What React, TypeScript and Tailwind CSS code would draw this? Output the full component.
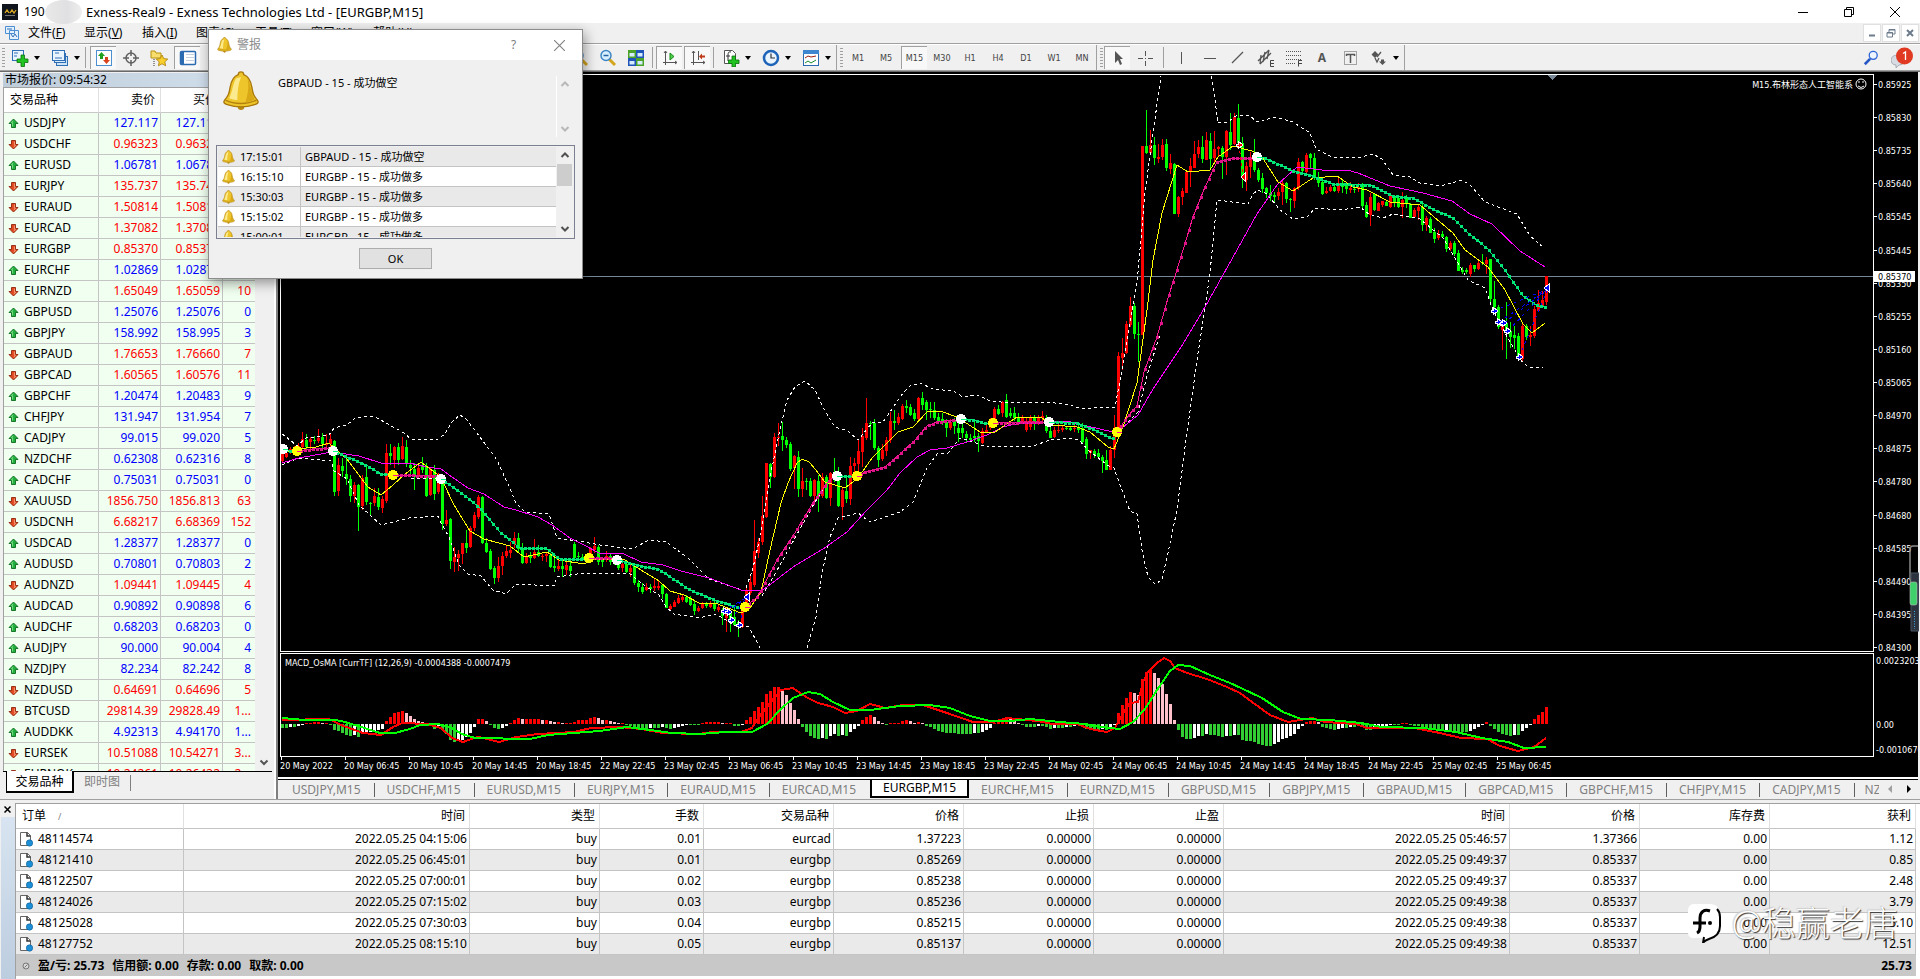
import React from "react";

type Quote = [string, boolean, string, string, string];

const quotes: Quote[] = [
  ["USDJPY", true, "127.117", "127.119", "2"],
  ["USDCHF", false, "0.96323", "0.96327", "4"],
  ["EURUSD", true, "1.06781", "1.06781", "0"],
  ["EURJPY", false, "135.737", "135.741", "4"],
  ["EURAUD", false, "1.50814", "1.50818", "4"],
  ["EURCAD", false, "1.37082", "1.37088", "6"],
  ["EURGBP", false, "0.85370", "0.85370", "0"],
  ["EURCHF", true, "1.02869", "1.02875", "6"],
  ["EURNZD", false, "1.65049", "1.65059", "10"],
  ["GBPUSD", true, "1.25076", "1.25076", "0"],
  ["GBPJPY", true, "158.992", "158.995", "3"],
  ["GBPAUD", false, "1.76653", "1.76660", "7"],
  ["GBPCAD", false, "1.60565", "1.60576", "11"],
  ["GBPCHF", true, "1.20474", "1.20483", "9"],
  ["CHFJPY", true, "131.947", "131.954", "7"],
  ["CADJPY", true, "99.015", "99.020", "5"],
  ["NZDCHF", true, "0.62308", "0.62316", "8"],
  ["CADCHF", true, "0.75031", "0.75031", "0"],
  ["XAUUSD", false, "1856.750", "1856.813", "63"],
  ["USDCNH", false, "6.68217", "6.68369", "152"],
  ["USDCAD", true, "1.28377", "1.28377", "0"],
  ["AUDUSD", true, "0.70801", "0.70803", "2"],
  ["AUDNZD", false, "1.09441", "1.09445", "4"],
  ["AUDCAD", true, "0.90892", "0.90898", "6"],
  ["AUDCHF", true, "0.68203", "0.68203", "0"],
  ["AUDJPY", true, "90.000", "90.004", "4"],
  ["NZDJPY", true, "82.234", "82.242", "8"],
  ["NZDUSD", false, "0.64691", "0.64696", "5"],
  ["BTCUSD", false, "29814.39", "29828.49", "1..."],
  ["AUDDKK", true, "4.92313", "4.94170", "1..."],
  ["EURSEK", false, "10.51088", "10.54271", "3..."],
  ["EURNOK", false, "10.24261", "10.26432", "2..."],
];

const orders = [
  ["48114574", "2022.05.25 04:15:06", "buy", "0.01", "eurcad", "1.37223", "0.00000", "0.00000", "2022.05.25 05:46:57", "1.37366", "0.00", "1.12"],
  ["48121410", "2022.05.25 06:45:01", "buy", "0.01", "eurgbp", "0.85269", "0.00000", "0.00000", "2022.05.25 09:49:37", "0.85337", "0.00", "0.85"],
  ["48122507", "2022.05.25 07:00:01", "buy", "0.02", "eurgbp", "0.85238", "0.00000", "0.00000", "2022.05.25 09:49:37", "0.85337", "0.00", "2.48"],
  ["48124026", "2022.05.25 07:15:02", "buy", "0.03", "eurgbp", "0.85236", "0.00000", "0.00000", "2022.05.25 09:49:38", "0.85337", "0.00", "3.79"],
  ["48125028", "2022.05.25 07:30:03", "buy", "0.04", "eurgbp", "0.85215", "0.00000", "0.00000", "2022.05.25 09:49:38", "0.85337", "0.00", "5.10"],
  ["48127752", "2022.05.25 08:15:10", "buy", "0.05", "eurgbp", "0.85137", "0.00000", "0.00000", "2022.05.25 09:49:38", "0.85337", "0.00", "12.51"],
];

const alerts = [
  ["17:15:01", "GBPAUD - 15 - 成功做空"],
  ["16:15:10", "EURGBP - 15 - 成功做多"],
  ["15:30:03", "EURGBP - 15 - 成功做多"],
  ["15:15:02", "EURGBP - 15 - 成功做多"],
  ["15:00:01", "EURGBP - 15 - 成功做多"],
];

const chartTabs = ["USDJPY", "USDCHF", "EURUSD", "EURJPY", "EURAUD", "EURCAD", "EURGBP", "EURCHF", "EURNZD", "GBPUSD", "GBPJPY", "GBPAUD", "GBPCAD", "GBPCHF", "CHFJPY", "CADJPY"];

/* Candles, one every 4 units from x=282: colour, high, body top, body bottom, low */
const candleText = `
r453,454,461,462 r450,453,457,458 r447,449,452,454 r446,448,450,452 r443,446,448,450 r432,439,447,449 g434,440,447,449 r437,439,442,449
g436,440,441,444 r429,438,441,443 g433,437,444,448 r434,443,445,448 r434,439,444,448 g440,441,492,496 r458,465,491,496 g458,466,471,477
g457,474,479,485 g475,479,496,502 r482,485,496,503 g484,485,507,531 r475,478,506,510 g465,477,502,505 g502,503,504,515 r488,496,503,506
g488,497,507,510 r496,499,508,513 r444,453,501,503 g444,453,456,465 r446,447,460,468 g443,447,460,465 r437,446,459,460 g440,447,464,467
g460,465,468,475 g463,469,477,490 r465,468,477,478 g457,465,470,473 g463,467,496,497 r467,469,495,496 g465,470,494,500 r473,477,492,494
g475,478,524,530 r510,520,524,526 g518,519,561,569 r547,557,562,572 r550,554,558,571 r543,543,554,564 g530,543,548,553 r526,528,547,548
r512,515,528,531 r495,497,517,519 g496,497,543,544 g538,543,552,553 g549,551,569,570 g566,568,578,584 r557,566,578,582 r552,556,566,575
r545,551,556,558 r542,550,553,558 r532,538,544,548 g533,538,549,553 g543,549,563,564 r553,557,563,564 g552,556,558,563 r539,552,558,559
g545,552,556,557 r554,556,557,561 r552,554,556,562 g553,555,567,568 g558,566,568,572 r560,566,569,571 g560,566,569,577 r560,565,570,575
g562,566,571,577 g542,544,558,559 g552,556,557,560 g554,557,559,561 g555,558,560,562 r547,549,562,563 r537,546,550,553 g545,547,562,565
g557,559,562,567 r551,556,560,562 g553,556,562,565 g557,560,563,565 g559,561,568,570 r560,564,568,572 g562,564,572,573 r564,568,572,577
g565,566,583,585 g580,583,587,592 g583,587,592,594 r583,587,590,591 g584,587,589,593 r579,586,588,591 r580,586,588,590 g584,585,594,599
g593,594,608,608 r604,606,609,611 r600,602,607,607 r595,598,603,604 r594,597,600,602 g595,597,602,603 g596,599,605,606 g601,604,611,615
r606,608,611,612 r602,604,608,609 g602,604,606,608 r601,604,607,608 g598,604,609,611 r604,607,610,612 g608,610,616,625 r608,612,618,632
g610,612,620,632 g607,617,625,626 g620,622,626,637 r608,611,627,628 r585,591,610,612 r574,582,593,595 r520,551,585,587 r538,542,553,558
r496,516,542,545 r463,463,517,518 g463,464,477,488 r433,437,477,478 r423,437,438,446 g422,436,440,451 g437,440,445,448 g442,444,469,471
r455,456,468,489 g451,457,489,497 r468,481,489,497 g478,481,482,490 g478,481,496,497 r479,480,496,502 g475,481,497,512 r473,477,496,498
g475,477,498,499 r472,473,498,506 g458,473,480,482 g467,475,506,507 r487,490,507,520 g475,491,499,503 r457,466,499,505 r458,463,466,475
r440,451,464,475 r428,436,452,467 r398,423,438,440 g421,423,424,440 g419,423,448,450 g446,448,460,467 r444,450,459,461 r437,440,451,456
r412,421,440,443 g410,421,423,430 r413,417,423,425 r404,406,419,420 g400,406,408,413 g404,407,415,416 g409,413,419,421 r397,398,419,421
g392,398,405,410 g400,402,410,420 g402,409,410,418 g402,410,418,420 g413,417,421,423 g413,419,423,425 g419,422,428,437 r419,422,428,430
g418,420,426,434 g423,428,433,442 g423,428,433,438 g431,434,438,442 g434,438,440,441 g421,436,438,442 g433,436,441,452 r428,431,443,444
r423,430,432,433 r418,420,428,430 r407,409,422,424 g405,409,414,415 r401,402,413,417 g394,400,417,418 g408,413,416,418 g407,413,418,421
g413,418,422,425 r415,418,422,423 r417,421,430,432 r415,418,427,430 g415,418,424,430 r415,417,424,425 r411,416,418,421 g415,418,431,433
g425,431,438,438 r427,430,437,438 r423,430,431,433 r425,428,430,432 g427,428,429,430 g427,428,430,431 r424,428,429,432 g425,428,430,433
g423,428,442,444 g437,439,454,459 r450,450,453,459 g449,451,455,458 g449,453,457,458 g455,457,461,473 g450,460,470,470 r446,450,470,470
r415,430,450,458 r352,356,432,433 r338,353,358,370 r321,324,353,354 r297,306,325,327 g303,306,334,339 g322,334,335,362 r146,146,335,335
g110,146,153,154 r130,145,153,155 g137,145,158,165 r144,157,159,163 r139,145,157,160 g139,144,168,171 r154,163,169,174 g163,164,214,214
r196,197,214,217 r188,191,197,205 r171,172,193,193 r158,166,172,187 r141,154,168,168 r140,147,154,158 g136,147,159,163 r132,140,160,160
g133,141,159,168 r131,149,158,164 r146,147,149,157 g146,148,157,179 r130,131,157,175 g113,132,145,150 r113,117,144,145 g104,118,143,145
g137,143,176,188 r162,166,180,191 r152,157,167,178 g139,157,170,172 g168,170,180,182 g173,178,189,193 g187,188,193,198 g185,193,196,201
g192,195,197,203 r188,192,196,200 r180,183,192,205 g182,183,199,203 g198,199,200,212 r187,188,201,208 r158,162,188,190 g161,162,171,173
r153,155,172,174 g153,154,158,168 g153,158,178,180 g172,178,183,187 g178,182,194,195 r187,191,193,194 r185,187,191,192 g184,187,191,192
r177,183,191,193 g180,183,187,193 g182,185,189,194 r182,188,190,193 g185,189,190,193 r183,187,189,192 g183,185,206,209 g202,205,217,218
r193,197,215,226 g193,194,210,211 r202,203,211,211 r201,201,205,207 g200,202,206,206 r193,195,207,208 g195,197,203,207 g196,198,207,208
r192,200,207,218 g195,198,204,208 g203,204,218,218 r208,210,217,218 r205,207,211,220 g204,207,225,231 r216,218,225,231 g217,219,233,233
g228,232,239,243 r230,234,238,240 g231,234,237,238 g236,237,249,252 r241,243,249,251 g241,243,254,256 g250,253,271,271 g267,270,272,274
g268,270,272,274 r263,265,274,277 g265,265,269,272 r259,263,269,270 g254,262,263,265 r257,260,264,274 g259,259,299,304 g281,299,307,308
g305,307,327,329 r321,323,330,350 g302,323,330,359 g322,331,337,348 g326,335,338,349 g333,336,356,358 r322,326,359,361 g324,326,337,340
r326,335,337,346 r306,309,336,338 r290,303,311,312 r291,300,307,308 r276,276,302,305`;

const candles = candleText
  .trim()
  .split(/\s+/)
  .map((c) => ({ up: c[0] === "r", v: c.slice(1).split(",").map(Number) }));

const histogram = [
  -4, -4, -3, -3, -2, -1, 1, 1, 2, 2, 1, 1, -1, -6, -7, -9,
  -11, -12, -11, -13, -10, -9, -8, -7, -6, -5, 3, 7, 11, 12, 13, 11,
  8, 5, 3, 2, -2, -2, -5, -2, -6, -10, -16, -18, -17, -16, -13, -9,
  -3, 5, 5, 3, -1, -4, -5, -4, -2, 1, 4, 6, 5, 5, 5, 5,
  5, 4, 4, 3, 2, 2, 1, 1, 1, 2, 4, 4, 4, 6, 7, 6,
  4, 4, 3, 2, 1, 1, -1, -2, -3, -4, -5, -5, -4, -4, -4, -3,
  -4, -5, -4, -3, -2, -1, -1, -1, -1, 1, 2, 2, 2, 2, 1, 1,
  1, -2, -2, -1, 4, 7, 13, 17, 22, 30, 33, 37, 37, 33, 29, 21,
  14, 5, -3, -8, -12, -14, -15, -14, -15, -12, -10, -12, -11, -12, -8, -5,
  -2, 4, 7, 9, 7, 3, 1, -1, 1, 1, 1, 3, 4, 3, 1, 2,
  1, -2, -3, -5, -7, -8, -9, -9, -9, -10, -10, -10, -10, -9, -9, -8,
  -6, -4, 1, 2, 3, 6, 5, 3, 1, -1, -3, -3, -3, -2, -2, -3,
  -5, -4, -4, -4, -3, -3, -2, -1, -2, -5, -6, -6, -6, -5, -6, -5,
  -1, 11, 19, 26, 32, 31, 29, 45, 52, 55, 51, 46, 40, 30, 20, 4,
  -6, -13, -15, -15, -14, -12, -12, -10, -11, -11, -12, -13, -12, -12, -11, -11,
  -16, -17, -17, -18, -20, -21, -22, -22, -20, -18, -15, -14, -12, -10, -5, -2,
  2, 3, 3, 2, -3, -4, -5, -6, -5, -4, -4, -3, -3, -2, -3, -6,
  -6, -5, -4, -3, -2, -1, -1, -1, 1, 1, -1, -2, -2, -3, -4, -5,
  -5, -6, -7, -6, -6, -7, -8, -8, -8, -7, -5, -3, -1, 2, -2, -5,
  -8, -10, -11, -12, -11, -11, -7, -4, -1, 5, 9, 12, 17,
];

function barColor(v: number, prev: number) {
  if (v > 0) return v >= prev ? "#ff0000" : "#ffc0cb";
  return v <= prev ? "#32cd32" : "#ffffff";
}

const slowLine =
  "282,463 299,458 332,452 359,456 381,463 409,463 427,467 441,469 452,477 468,488 484,494 504,507 516,510 538,517 552,525 570,538 584,545 599,553 624,554 641,562 663,565 681,571 709,578 741,590 761,591 767,587 793,567 823,549 847,532 867,510 887,490 900,473 917,457 930,450 947,448 967,442 987,435 1003,427 1020,423 1043,423 1067,421 1087,426 1113,432 1117,432 1138,415 1153,389 1183,344 1205,307 1223,275 1257,214 1277,185 1297,167 1330,171 1347,170 1358,173 1390,186 1423,193 1452,201 1470,214 1492,224 1520,251 1545,267";
const fastLine =
  "282,453 297,449 316,447 329,443 338,451 347,459 368,487 381,495 393,485 404,475 421,462 438,475 443,482 454,505 470,531 484,539 510,546 524,557 547,552 559,560 584,564 595,559 625,560 641,570 659,581 670,591 684,595 699,603 715,603 741,613 750,608 761,592 770,550 781,503 788,483 797,463 802,459 809,462 816,470 825,482 845,488 858,478 872,458 898,432 913,427 928,411 940,411 957,417 980,432 995,432 1017,417 1042,418 1053,425 1077,427 1090,432 1108,447 1114,449 1123,427 1137,383 1147,310 1153,260 1162,213 1177,165 1188,172 1210,170 1218,157 1233,146 1252,151 1262,157 1278,182 1293,191 1313,178 1337,176 1353,187 1367,190 1390,202 1420,205 1453,233 1465,250 1488,267 1505,290 1523,324 1532,333 1545,323";
const bands = [
  "282,434 290,440 297,446 306,438 329,435 334,428 347,425 354,419 366,416 375,417 388,424 404,433 411,439 438,439 445,434 452,422 460,415 466,419 477,433 497,460 507,482 516,503 525,512 549,514 557,538 584,542 600,545 632,549 649,540 666,542 688,558 709,579 745,591 753,568 761,533 770,477 781,425 787,400 795,387 805,381 815,390 823,407 835,427 848,431 858,440 872,423 883,422 903,393 910,386 920,383 933,389 953,391 963,397 978,395 990,401 1012,403 1047,402 1070,405 1082,409 1107,407 1115,407 1122,370 1130,323 1137,283 1145,193 1153,133 1161,76",
  "1211,76 1215,100 1218,123 1228,122 1237,115 1250,116 1257,122 1275,117 1293,122 1310,133 1316,149 1332,157 1357,158 1373,154 1382,159 1393,175 1410,177 1420,183 1440,186 1462,180 1470,185 1485,202 1517,214 1530,236 1543,247",
  "282,465 299,458 331,461 334,471 347,479 359,505 381,525 409,518 438,516 441,523 449,537 459,565 468,574 481,576 493,590 506,594 516,584 554,586 557,577 577,574 629,573 645,586 659,595 666,607 674,614 699,618 716,614 734,625 749,627 761,650",
  "807,648 816,617 822,573 830,537 838,518 858,513 870,522 900,512 913,502 927,468 937,454 948,453 960,438 973,442 987,447 1033,446 1050,440 1070,438 1079,440 1088,450 1110,467 1114,468 1120,485 1130,511 1137,514 1142,550 1148,577 1155,584 1162,580 1168,553 1177,510 1185,447 1197,360 1205,308 1210,273 1217,200 1232,202 1248,204 1253,194 1258,190 1267,194 1280,210 1293,219 1307,217 1315,208 1340,210 1360,207 1370,215 1383,218 1393,214 1420,219 1443,238 1458,263 1468,280 1485,288 1493,310 1507,337 1523,363 1530,368 1543,367",
  "762,596 775,574 795,538 815,502 832,477",
  "1120,431 1138,412 1148,372 1160,335",
  "411,478 438,479",
];

type Trend = { falling: boolean; pts: [number, number][] };
const trends: Trend[] = [
  { falling: true, pts: [[282, 449], [289, 451], [297, 451]] },
  { falling: false, pts: [[297, 451], [315, 449], [329, 448]] },
  { falling: true, pts: [[333, 451], [345, 456], [368, 466], [381, 474], [393, 475]] },
  { falling: false, pts: [[393, 475], [437, 476]] },
  { falling: true, pts: [[441, 479], [463, 494], [480, 508], [500, 532], [520, 548], [546, 548], [560, 559], [589, 559]] },
  { falling: false, pts: [[589, 558], [614, 558]] },
  { falling: true, pts: [[617, 560], [660, 570], [690, 590], [715, 600], [740, 608]] },
  { falling: false, pts: [[745, 607], [756, 598], [762, 589], [777, 560], [793, 536], [813, 503], [827, 483], [834, 476]] },
  { falling: true, pts: [[837, 476], [857, 476]] },
  { falling: false, pts: [[857, 476], [868, 471], [885, 467], [900, 454], [915, 440], [927, 426], [937, 422], [957, 420]] },
  { falling: true, pts: [[961, 419], [973, 420], [983, 423], [993, 423]] },
  { falling: false, pts: [[993, 423], [1045, 422]] },
  { falling: true, pts: [[1049, 422], [1077, 423], [1095, 430], [1110, 438], [1113, 438]] },
  { falling: false, pts: [[1117, 432], [1128, 416], [1137, 406], [1144, 372], [1157, 337], [1168, 298], [1180, 260], [1193, 217], [1205, 187], [1217, 162], [1233, 158], [1254, 158]] },
  { falling: true, pts: [[1257, 157], [1265, 158], [1280, 165], [1293, 171], [1310, 175], [1333, 184], [1370, 185], [1393, 196], [1413, 198], [1435, 210], [1453, 218], [1467, 232], [1488, 249], [1507, 273], [1523, 296], [1538, 306], [1545, 307]] },
];

function dotsAlong(pts: [number, number][]) {
  const out: [number, number][] = [];
  let s = 0;
  for (let x = pts[0][0]; x <= pts[pts.length - 1][0]; x += 4) {
    while (s < pts.length - 2 && x > pts[s + 1][0]) s++;
    const [x0, y0] = pts[s];
    const [x1, y1] = pts[s + 1];
    out.push([x, Math.round(y0 + ((y1 - y0) * (x - x0)) / (x1 - x0))]);
  }
  return out;
}

const whiteMarks = [[283, 449], [333, 451], [441, 479], [617, 560], [837, 476], [961, 419], [1049, 422], [1257, 157]];
const yellowMarks = [[297, 451], [393, 475], [589, 558], [745, 607], [857, 476], [993, 423], [1117, 432]];
const buyMarks = [[724, 611], [728, 612], [731, 620], [739, 625], [1494, 311], [1498, 322], [1503, 323], [1507, 331], [1519, 357]];

const macdLine =
  "282,720 329,719 341,725 363,733 381,735 393,727 402,723 427,724 441,728 452,738 463,742 474,738 479,737 499,742 516,737 538,734 574,732 591,728 620,727 641,729 663,733 699,734 713,732 741,732 752,728 759,717 770,703 781,690 793,688 806,697 818,703 833,707 845,713 857,711 870,704 885,708 903,705 923,705 947,713 973,722 993,722 1007,718 1037,721 1053,724 1077,724 1090,729 1107,732 1115,728 1122,715 1130,703 1138,702 1143,682 1148,672 1157,663 1164,658 1170,661 1175,668 1187,673 1207,679 1227,687 1240,693 1252,702 1270,715 1288,722 1312,718 1325,722 1356,724 1367,728 1414,728 1440,733 1461,738 1487,739 1500,746 1518,751 1534,747 1546,738";
const signalLine =
  "282,718 305,720 336,720 345,722 358,726 380,733 395,733 410,729 420,725 438,724 450,727 462,734 475,738 530,739 548,735 600,731 627,727 650,730 672,733 700,734 725,732 752,732 767,724 780,710 793,698 808,692 820,694 833,702 850,710 870,710 900,706 930,705 950,708 970,716 990,721 1010,721 1030,719 1060,722 1085,724 1100,727 1120,729 1133,722 1145,709 1157,690 1170,671 1178,665 1190,666 1210,675 1230,683 1241,688 1262,698 1283,712 1301,719 1330,720 1361,723 1382,727 1424,728 1456,732 1482,738 1508,742 1524,748 1546,747";

const priceLabels = ["0.85925", "0.85830", "0.85735", "0.85640", "0.85545", "0.85445", "0.85350", "0.85255", "0.85160", "0.85065", "0.84970", "0.84875", "0.84780", "0.84680", "0.84585", "0.84490", "0.84395", "0.84300"];
const timeLabels = ["20 May 2022", "20 May 06:45", "20 May 10:45", "20 May 14:45", "20 May 18:45", "22 May 22:45", "23 May 02:45", "23 May 06:45", "23 May 10:45", "23 May 14:45", "23 May 18:45", "23 May 22:45", "24 May 02:45", "24 May 06:45", "24 May 10:45", "24 May 14:45", "24 May 18:45", "24 May 22:45", "25 May 02:45", "25 May 06:45"];

function PriceChart() {
  return (
    <svg
      viewBox="278 72 1640 705"
      preserveAspectRatio="none"
      shapeRendering="crispEdges"
      className="block h-full w-full bg-black font-['DejaVu_Sans_Condensed','Noto_Sans_CJK_SC',sans-serif] text-[9px]"
      role="img"
      aria-label="EURGBP,M15"
    >
      <defs>
        <clipPath id="price-area">
          <rect x="281" y="75" width="1592" height="576" />
        </clipPath>
      </defs>
      <line x1="281" x2="1873" y1="276.5" y2="276.5" stroke="#778899" />
      <g clipPath="url(#price-area)">
        {candles.map((c, i) => {
          const x = 282 + i * 4;
          const [hi, top, bot, lo] = c.v;
          return (
            <path
              key={i}
              fill={c.up ? "#ff0000" : "#00ff00"}
              d={`M${x} ${hi}h1V${lo}h-1zM${x - 1} ${top}h3V${Math.max(bot, top + 1)}h-3z`}
            />
          );
        })}
        {bands.map((b, i) => (
          <polyline key={i} points={b} fill="none" stroke="#fff" strokeDasharray="3 3" />
        ))}
        <polyline points={slowLine} fill="none" stroke="#ff00ff" />
        <polyline points={fastLine} fill="none" stroke="#ffff00" />
        {trends.map((t, i) => {
          const color = t.falling ? "#00ff7f" : "#ff1493";
          return (
            <g key={i} fill={t.falling ? "#00e676" : "#e0138a"}>
              <polyline points={t.pts.map((p) => p.join(",")).join(" ")} fill="none" stroke={color} />
              {dotsAlong(t.pts).map(([x, y]) => (
                <rect key={x} x={x - 1} y={y - 1} width="3" height="3" />
              ))}
            </g>
          );
        })}
        <g stroke="#0000ff" fill="none" strokeDasharray="3 4">
          <path d="M1494 311L1548 289M1499 322L1548 289M1504 323L1548 289M1508 331L1548 289M1519 357L1548 289M724 611L747 597M728 612L747 597M731 620L747 597M739 625L747 597" />
        </g>
        <path d="M1239 145L1243 177" stroke="#ff0000" strokeDasharray="3 3" />
        {whiteMarks.map(([x, y]) => (
          <circle key={x} cx={x} cy={y} r="5" fill="#fff" />
        ))}
        {yellowMarks.map(([x, y]) => (
          <circle key={x} cx={x} cy={y} r="5" fill="#ffff00" />
        ))}
        {whiteMarks.map(([x, y]) => (
          <path key={x} d={`M${x} ${y + 0.5}h5`} stroke="#00ff7f" />
        ))}
        {yellowMarks.map(([x, y]) => (
          <path key={x} d={`M${x} ${y + 0.5}h5`} stroke="#ff1493" />
        ))}
        {buyMarks.map(([x, y]) => (
          <path key={x} d={`M${x - 3} ${y - 1}h2v-3l5 4l-5 4v-3h-2z`} fill="#0000ff" stroke="#fff" />
        ))}
        <path d="M1236 144h2v-3l5 4l-5 4v-3h-2z" fill="#ff0000" stroke="#fff" />
        <path d="M1245 173v8l-4-4z" fill="#ff0000" stroke="#fff" />
        <path d="M1549 284v8l-5-4zM749 593v8l-5-4z" fill="#0000ff" stroke="#fff" />
      </g>
      <path d="M1548 75h9l-4 5h-1z" fill="#778899" />
      {histogram.map((v, i) => (
        <rect key={i} x={281 + i * 4} y={v > 0 ? 724 - v : 724} width="3" height={Math.abs(v)} fill={barColor(v, i ? histogram[i - 1] : 0)} />
      ))}
      <polyline points={macdLine} fill="none" stroke="#ff0000" strokeWidth="2" />
      <polyline points={signalLine} fill="none" stroke="#00ff00" strokeWidth="2" />
      <path d="M280.500 651.500V74.500H1873.500V651.500zM280.500 756.500V653.500H1873.500V756.500z" fill="none" stroke="#fff" />
      {timeLabels.map((t, i) => (
        <g key={i}>
          <path d={`M${281.5 + 64 * i} 757v3`} stroke="#fff" />
          <text x={280 + 64 * i} y="769" fill="#fff">{t}</text>
        </g>
      ))}
      {priceLabels.map((p, i) => {
        const y = Math.round(84 + (563 / 17) * i);
        return (
          <g key={p}>
            <path d={`M1874 ${y + 0.5}h3`} stroke="#fff" />
            <text x="1878" y={y + 4} fill="#fff">{p}</text>
          </g>
        );
      })}
      <rect x="1874" y="271" width="41" height="11" fill="#fff" />
      <text x="1878" y="280" fill="#000">0.85370</text>
      <text x="1876" y="664" fill="#fff">0.0023203</text>
      <text x="1876" y="728" fill="#fff">0.00</text>
      <text x="1876" y="753" fill="#fff">-0.0010670</text>
      <text x="285" y="666" fill="#fff">MACD_OsMA [CurrTF] (12,26,9) -0.0004388 -0.0007479</text>
      <text x="1853" y="88" fill="#fff" textAnchor="end">M15.布林形态人工智能系</text>
      <g fill="none" stroke="#fff" shapeRendering="auto">
        <circle cx="1861" cy="84" r="5" />
        <path d="M1858 86q3 3 6 0" />
        <path d="M1859 81v2M1863 81v2" />
      </g>
    </svg>
  );
}

function QuoteArrow({ up }: { up: boolean }) {
  return (
    <svg viewBox="0 0 11 11" className={up ? "h-[11px] w-[11px]" : "h-[11px] w-[11px] rotate-180"}>
      <path d="M5.500 1L10 5.500H7.500V9.500H3.500V5.500H1z" fill={up ? "#1fae3b" : "#e0481f"} stroke={up ? "#0b6b1c" : "#8f2408"} strokeWidth=".9" />
      <path d="M5.200 2.800L3.500 4.800H4.600V8.500" fill="none" stroke={up ? "#8fe89c" : "#ffb08f"} strokeWidth=".8" />
    </svg>
  );
}

function Bell({ className }: { className: string }) {
  return (
    <svg viewBox="0 0 40 44" className={className}>
      <ellipse cx="20" cy="40" rx="3.500" ry="3" fill="#b98a10" />
      <path d="M20 1c2 0 3 1 3 3 6 2 8 8 9 14 1 7 2 9 6 14 2 3 0 4-3 5-9 3-21 3-30 0-3-1-5-2-3-5 4-5 5-7 6-14 1-6 3-12 9-14 0-2 1-3 3-3z" fill="#eec52b" stroke="#a9780c" strokeWidth="1.500" />
      <path d="M15 8c-4 5-4 14-8 22 3 1 6 2 9 2 0-9 1-18 4-25z" fill="#fff3a8" opacity=".8" />
      <path d="M27 8c4 7 4 16 8 23-3 2-6 3-10 3 3-9 4-18 2-26z" fill="#c99409" opacity=".6" />
      <path d="M3 32c9 5 25 5 34 0" fill="none" stroke="#b3820d" strokeWidth="1.500" />
    </svg>
  );
}

function Ico({ children, size = 18 }: { children: React.ReactNode; size?: number }) {
  return (
    <svg viewBox="0 0 18 18" width={size} height={size} fill="none" className="shrink-0">
      {children}
    </svg>
  );
}

const Drop = () => <span className="mt-px h-0 w-0 border-x-[3px] border-t-[4px] border-x-transparent border-t-black" />;
const Sep = () => <span className="mx-[2px] h-[21px] w-px bg-[#a0a0a0]" />;
const Grip = () => <span className="ml-[3px] h-[19px] w-[3px] bg-[repeating-linear-gradient(180deg,#a0a0a0_0px,#a0a0a0_1px,#f0f0f0_1px,#f0f0f0_3px)]" />;

function Tool({ label, pressed, wide, drop, children }: { label: string; pressed?: boolean; wide?: boolean; drop?: boolean; children: React.ReactNode }) {
  const width = wide ? "w-[38px]" : "w-[26px]";
  const state = pressed ? "border-l border-t border-[#a0a0a0] bg-[#f8f8f8]" : "";
  return (
    <button aria-label={label} className={`mx-px flex h-[23px] shrink-0 items-center justify-center gap-[5px] ${width} ${state}`}>
      {children}
      {drop && <Drop />}
    </button>
  );
}

function Toolbar() {
  return (
    <div className="flex h-[26px] items-center border-b border-[#a0a0a0]">
      <span className="ml-[2px] h-[19px] w-[3px] bg-[repeating-linear-gradient(180deg,#a0a0a0_0px,#a0a0a0_1px,#f0f0f0_1px,#f0f0f0_3px)]" />
      <Tool label="新图表" wide drop>
        <Ico>
          <rect x="1.500" y="1.500" width="11" height="10" fill="#eaf4ff" stroke="#2f6fb5" />
          <path d="M3 4h4M3 7h3" stroke="#2f6fb5" />
          <path d="M10 6h3.500v4H17v3.500h-3.500v4H10v-4H6V10h4z" fill="#21c321" stroke="#0a700a" strokeWidth=".8" />
        </Ico>
      </Tool>
      <Tool label="配置文件" wide drop>
        <Ico>
          <rect x="5.500" y="7.500" width="11" height="9" fill="#cfe3f7" stroke="#2f6fb5" />
          <rect x="3.500" y="4.500" width="11" height="9" fill="#dcebfa" stroke="#2f6fb5" />
          <rect x="1.500" y="1.500" width="12" height="10" fill="#eaf4ff" stroke="#2f6fb5" />
          <path d="M4 4h4M4 9h7" stroke="#2f6fb5" />
        </Ico>
      </Tool>
      <span className="mr-[3px] h-[21px] w-px bg-[#a0a0a0]" />
      <Tool label="市场报价" pressed>
        <Ico>
          <rect x="1.500" y="1.500" width="15" height="15" fill="#fff" stroke="#4c8fd0" />
          <path d="M6.500 3L10 7H8v3H5V7H3z" fill="#20a020" />
          <path d="M11.500 15L8 11h2V8h3v3h2z" fill="#d8421c" />
        </Ico>
      </Tool>
      <Tool label="数据窗口">
        <Ico>
          <circle cx="9" cy="9" r="5" stroke="#606060" strokeWidth="1.500" />
          <path d="M9 1v6M9 11v6M1 9h6M11 9h6" stroke="#606060" strokeWidth="1.500" />
        </Ico>
      </Tool>
      <Tool label="导航">
        <Ico>
          <path d="M1 2h4l1 2h5v5H1z" fill="#f7dd6e" stroke="#b8900f" />
          <path d="M4 10v7" stroke="#333" strokeDasharray="1 1" />
          <path d="M12 6l1.800 3.600 4 .5-3 2.700.9 4-3.700-2-3.600 2 .8-4-3-2.700 4-.5z" fill="#f8cf2c" stroke="#a97c06" strokeWidth=".8" />
        </Ico>
      </Tool>
      <Tool label="终端" pressed>
        <Ico>
          <rect x="1.500" y="2.500" width="15" height="13" rx="1" fill="#fff" stroke="#2a6ab0" strokeWidth="1.500" />
          <path d="M2 3h3v12H2z" fill="#2a6ab0" />
          <path d="M7 5.500h8M7 8.500h8M7 11.500h8" stroke="#c4d2e0" />
        </Ico>
      </Tool>
      <span className="w-[365px] shrink-0" />
      <Tool label="放大">
        <Ico>
          <path d="M10 10l6 6" stroke="#d3a51c" strokeWidth="3" />
          <circle cx="7" cy="6.500" r="5" fill="#d7efff" stroke="#3f86c4" strokeWidth="1.500" />
          <path d="M4.500 6.500h5M7 4v5" stroke="#2463a0" strokeWidth="1.500" />
        </Ico>
      </Tool>
      <Tool label="缩小">
        <Ico>
          <path d="M10 10l6 6" stroke="#d3a51c" strokeWidth="3" />
          <circle cx="7" cy="6.500" r="5" fill="#d7efff" stroke="#3f86c4" strokeWidth="1.500" />
          <path d="M4.500 6.500h5" stroke="#2463a0" strokeWidth="1.500" />
        </Ico>
      </Tool>
      <Tool label="平铺窗口">
        <Ico>
          <path d="M1 1h8v8H1zM9 9h8v8H9z" fill="#4ba32a" />
          <path d="M9 1h8v8H9zM1 9h8v8H1z" fill="#1f54b8" />
          <path d="M2.500 4h5v3.500h-5zM10.500 4h5v3.500h-5zM2.500 12h5v3.500h-5zM10.500 12h5v3.500h-5z" fill="#d6ecff" />
        </Ico>
      </Tool>
      <Sep />
      <Tool label="自动滚动" pressed>
        <Ico>
          <path d="M4.500 2v14M2 13.500h14M3 4l1.500-2L6 4M14 12l2 1.500-2 1.500" stroke="#555" />
          <path d="M9 4v7l4-3.500z" fill="#4fd04f" stroke="#178a17" />
        </Ico>
      </Tool>
      <Tool label="图表平移" pressed>
        <Ico>
          <path d="M4.500 2v14M2 13.500h14M3 4l1.500-2L6 4M14 12l2 1.500-2 1.500M9.500 2v9" stroke="#555" />
          <path d="M10 7.500l3-3v2h3v2h-3v2z" fill="#c03a1a" />
        </Ico>
      </Tool>
      <Sep />
      <Tool label="技术指标" wide drop>
        <Ico>
          <path d="M2.500 1.500h8l3 3v10h-11z" fill="#fff" stroke="#555" />
          <path d="M9 3q-3-1-3 3v6M4 7h4" stroke="#333" />
          <path d="M10 7h3.500v4H17v3.500h-3.500V18H10v-3.500H6.500V11H10z" fill="#21c321" stroke="#0a700a" strokeWidth=".8" />
        </Ico>
      </Tool>
      <Tool label="周期" wide drop>
        <Ico>
          <circle cx="9" cy="9" r="7" fill="#e9f4ff" stroke="#1d63b8" strokeWidth="2.500" />
          <path d="M9 4.500V9h4" stroke="#333" strokeWidth="1.200" />
        </Ico>
      </Tool>
      <Tool label="模板" wide drop>
        <Ico>
          <rect x="1.500" y="1.500" width="15" height="15" fill="#fff" stroke="#2a6ab0" />
          <path d="M1 1h16v4H1z" fill="#3f86d0" />
          <path d="M3 9l3-2 3 1 5-1" stroke="#a02010" />
          <path d="M3 14l3-2 3 2 5-3" stroke="#178a30" />
        </Ico>
      </Tool>
      <span className="h-full w-px bg-[#a0a0a0]" />
      <Grip />
      <div className="ml-px flex font-['DejaVu_Sans_Condensed',sans-serif] text-[9px] text-[#444]">
        {["M1", "M5", "M15", "M30", "H1", "H4", "D1", "W1", "MN"].map((t) => (
          <Tool key={t} label={t} pressed={t === "M15"}>{t}</Tool>
        ))}
      </div>
      <span className="h-full w-px bg-[#a0a0a0]" />
      <Grip />
      <Tool label="光标" pressed>
        <Ico><path d="M6 2v12l3-3 2 5 2-1-2-5h3z" fill="#555" /></Ico>
      </Tool>
      <Tool label="十字准线">
        <Ico><path d="M9.500 2v5M9.500 12v5M2 9.500h5M12 9.500h5M9 9.500h1" stroke="#555" /></Ico>
      </Tool>
      <span className="mx-1 h-[21px] w-px bg-[#a0a0a0]" />
      <Tool label="垂直线"><Ico><path d="M8.500 3v12" stroke="#555" /></Ico></Tool>
      <Tool label="水平线"><Ico><path d="M3 9.500h12" stroke="#555" /></Ico></Tool>
      <Tool label="趋势线"><Ico><path d="M3 14L14 3" stroke="#555" strokeWidth="1.200" /></Ico></Tool>
      <Tool label="等距通道">
        <Ico>
          <path d="M1 12L12 1M3 15L14 4M4 6l-1 9M8 3l-2 10M12 1l-2 9" stroke="#555" strokeWidth="1.300" />
          <path d="M17 11.500h-3.500v6H17M14 14.500h3" stroke="#444" />
        </Ico>
      </Tool>
      <Tool label="斐波纳契">
        <Ico>
          <path d="M1 2.500h15M1 6.500h15M1 10.500h15M1 14.500h10" stroke="#555" strokeDasharray="1 1" />
          <path d="M17 11.500h-3.500v6M14 14.500h3" stroke="#444" />
        </Ico>
      </Tool>
      <Tool label="文本"><span className="text-[12px] font-bold text-[#555]">A</span></Tool>
      <Tool label="文本标签">
        <Ico>
          <rect x="3.500" y="2.500" width="12" height="13" stroke="#555" strokeDasharray="1 1" />
          <path d="M5 5.500h9M9.500 5v9M5.500 5v2M13.500 5v2" stroke="#555" strokeWidth="1.500" />
        </Ico>
      </Tool>
      <Tool label="箭头" wide drop>
        <Ico>
          <path d="M5 2l3.500 3.500L5 9 1.500 5.500zM12.500 16L9 12.500h2v-2h3v2h2z" fill="#555" />
          <path d="M11 3l-4 5M5 9l2 4 2-4" stroke="#555" strokeWidth="1.300" />
        </Ico>
      </Tool>
      <span className="h-full w-px bg-[#a0a0a0]" />
      <div className="ml-auto flex items-center pr-[7px]">
        <button aria-label="搜索" className="mr-2 flex h-6 w-6 items-center justify-center">
          <Ico size={16}>
            <path d="M2 16l6-6" stroke="#2457c5" strokeWidth="3" />
            <circle cx="11.500" cy="6" r="4.500" fill="#eef5ff" stroke="#2f66d6" strokeWidth="1.500" />
          </Ico>
        </button>
        <button aria-label="1 条消息" className="flex h-6 w-[22px] items-center">
          <svg viewBox="0 0 22 24" className="h-6 w-[22px]">
            <path d="M7 9c5 0 7 2 7 5s-3 5-6 5l-3 3v-3c-3 0-5-2-5-5s3-5 7-5z" fill="#d7dbe2" stroke="#9aa0aa" strokeWidth=".8" />
            <circle cx="13.500" cy="10" r="8.500" fill="#e03a22" />
            <path d="M12 7.500l2.500-1.500v8" fill="none" stroke="#fff" strokeWidth="1.300" />
          </svg>
        </button>
      </div>
    </div>
  );
}

function MenuBar() {
  const items = [
    ["文件", "F", "w-[56px]"],
    ["显示", "V", "w-[58px]"],
    ["插入", "I", "w-[54px]"],
    ["图表", "C", "w-[59px]"],
    ["工具", "T", "w-[56px]"],
    ["窗口", "W", "w-[62px]"],
    ["帮助", "H", "w-[60px]"],
  ];
  return (
    <nav className="flex h-[20px] items-center">
      <svg viewBox="0 0 16 16" className="ml-1 mr-2 h-4 w-4">
        <path d="M1.500 1.500h9v7h-9zM5.500 5.500h9v9h-9z" fill="#e4f1ff" stroke="#4c8fd0" />
        <path d="M7 9l2 3 2-3 2 3M3 4h5" fill="none" stroke="#2f6fb5" />
      </svg>
      {items.map(([t, k, w]) => (
        <button key={t} className={`text-left leading-5 ${w}`}>
          {t}(<u>{k}</u>)
        </button>
      ))}
      <div className="ml-auto flex gap-px pr-px text-[#6b7b8c]">
        <button aria-label="最小化图表" className="flex h-[18px] w-[18px] items-center justify-center border border-[#e0e0e0] bg-white">
          <svg viewBox="0 0 10 10" className="h-[10px] w-[10px]"><path d="M2 7.500h6" stroke="currentColor" strokeWidth="2" /></svg>
        </button>
        <button aria-label="还原图表" className="flex h-[18px] w-[18px] items-center justify-center border border-[#e0e0e0] bg-white">
          <svg viewBox="0 0 10 10" className="h-[10px] w-[10px]" fill="none" stroke="currentColor"><path d="M3 4V1.500h6V6H7" /><path d="M3 2h6" /><path d="M1 4.500h5.500V9H1z" /><path d="M1 5h6" /></svg>
        </button>
        <button aria-label="关闭图表" className="flex h-[18px] w-[18px] items-center justify-center border border-[#e0e0e0] bg-white">
          <svg viewBox="0 0 10 10" className="h-[10px] w-[10px]"><path d="M2 2l6 6M8 2l-6 6" stroke="currentColor" strokeWidth="2" /></svg>
        </button>
      </div>
    </nav>
  );
}

function TitleBar() {
  return (
    <header className="flex h-[23px] items-center bg-white">
      <svg viewBox="0 0 16 16" className="ml-[2px] mr-[6px] h-4 w-4">
        <path d="M0 0h16v16H0z" fill="#10141c" />
        <path d="M3 9l2-3 2 3M8 9l2-3 2 3 2-3" fill="none" stroke="#d9a820" strokeWidth="1.300" />
        <path d="M3 11.500h10" stroke="#777" />
      </svg>
      <span className="w-[21px] text-[12px] leading-5">190</span>
      <span className="mr-1 h-[24px] w-[37px] rounded-[50%] bg-[linear-gradient(90deg,#e9e9e9,#e0e0e2_60%,#eeeeee)]" />
      <h1 className="text-[13px] leading-5">Exness-Real9 - Exness Technologies Ltd - [EURGBP,M15]</h1>
      <div className="ml-auto flex">
        <button aria-label="最小化" className="flex h-5 w-[46px] items-center justify-center">
          <svg viewBox="0 0 10 10" className="h-[10px] w-[10px]"><path d="M0 5.500h10" stroke="#000" /></svg>
        </button>
        <button aria-label="还原" className="flex h-5 w-[46px] items-center justify-center">
          <svg viewBox="0 0 10 10" className="h-[10px] w-[10px]" fill="none" stroke="#000"><path d="M.5 2.500h7v7h-7zM2.500 2.500v-2h7v7h-2" /></svg>
        </button>
        <button aria-label="关闭" className="mr-[2px] flex h-5 w-[46px] items-center justify-center">
          <svg viewBox="0 0 10 10" className="h-[10px] w-[10px]"><path d="M0 0l10 10M10 0L0 10" stroke="#000" /></svg>
        </button>
      </div>
    </header>
  );
}

function MarketWatch() {
  return (
    <aside className="flex w-[276px] shrink-0 flex-col border-r-2 border-white pl-[3px]">
      <h2 className="mt-px h-[14px] w-[264px] bg-[linear-gradient(90deg,#bfcddb,#d3e0ee)] pl-[2px] leading-[14px]">市场报价: 09:54:32</h2>
      <div className="flex min-h-0 flex-1 overflow-hidden border-l border-t border-[#a0a0a0]">
        <div className="h-full w-[251px] overflow-hidden bg-white">
          <table className="w-full table-fixed border-separate border-spacing-0">
            <colgroup>
              <col className="w-[95px]" />
              <col className="w-[62px]" />
              <col className="w-[62px]" />
              <col />
            </colgroup>
            <thead>
              <tr className="h-[25px]">
                <th className="border-b border-r border-[#c8c8c8] border-r-[#e0e0e0] p-0 pl-[6px] text-left font-normal">交易品种</th>
                <th className="border-b border-r border-[#c8c8c8] border-r-[#e0e0e0] p-0 pr-[5px] text-right font-normal">卖价</th>
                <th className="border-b border-r border-[#c8c8c8] border-r-[#e0e0e0] p-0 pr-[5px] text-right font-normal">买价</th>
                <th className="border-b border-[#c8c8c8] p-0" aria-label="点差" />
              </tr>
            </thead>
            <tbody>
              {quotes.map(([sym, up, bid, ask, spread]) => (
                <tr key={sym} className={up ? "h-[21px] bg-[#f0fff0] text-[#0000ff]" : "h-[21px] bg-[#f0fff0] text-[#ff0000]"}>
                  <td className="border-b border-r border-[#c4c4c4] p-0 text-black">
                    <span className="flex items-center gap-[5px] pl-1 leading-5"><QuoteArrow up={up} />{sym}</span>
                  </td>
                  <td className="border-b border-r border-[#c4c4c4] p-0 pr-[2px] text-right leading-5">{bid}</td>
                  <td className="border-b border-r border-[#c4c4c4] p-0 pr-[2px] text-right leading-5">{ask}</td>
                  <td className="border-b border-[#c4c4c4] p-0 pr-1 text-right leading-5">{spread}</td>
                </tr>
              ))}
            </tbody>
          </table>
        </div>
        <div className="flex flex-1 flex-col justify-end pb-1">
          <svg viewBox="0 0 10 8" className="ml-1 h-[8px] w-[10px]"><path d="M1.500 1.500L5 5l3.500-3.500" fill="none" stroke="#555" strokeWidth="2" /></svg>
        </div>
      </div>
      <div role="tablist" className="mr-[2px] flex h-[28px] items-start border-t border-black pl-[3px]">
        <button role="tab" aria-selected="true" className="-mt-px h-[22px] w-[68px] border-b-2 border-r-2 border-l border-black bg-white leading-[19px]">交易品种</button>
        <button role="tab" aria-selected="false" className="h-[20px] w-[56px] text-center leading-[18px] text-[#808080]">即时图</button>
        <span className="mt-[3px] h-4 w-px bg-[#808080]" />
      </div>
    </aside>
  );
}

function ChartTabs() {
  return (
    <div className="flex h-[22px] items-start border-t-2 border-white">
      <div role="tablist" className="flex min-w-0 flex-1 overflow-hidden border-t border-black pl-[2px]">
        {chartTabs.map((s) =>
          s === "EURGBP" ? (
            <button key={s} role="tab" aria-selected="true" className="-mt-px flex h-[19px] shrink-0 items-center border-x-2 border-b-2 border-black bg-white px-[11px] leading-[18px]">
              {s},M15
            </button>
          ) : (
            <button key={s} role="tab" aria-selected="false" className="flex h-[19px] shrink-0 items-center gap-[13px] pl-3 leading-[16px] text-[#808080]">
              {s},M15
              <span className={s === "EURCAD" ? "h-[14px] w-px" : "h-[14px] w-px bg-[#606060]"} />
            </button>
          )
        )}
        <span className="ml-[10px] h-[19px] w-[14px] overflow-hidden leading-[19px] text-[#808080]">NZDCHF,M15</span>
      </div>
      <div className="flex h-[19px] w-[30px] items-center gap-3 border-t border-black">
        <button aria-label="上一个" className="h-0 w-0 border-y-4 border-r-4 border-y-transparent border-r-[#a0a0a0]" />
        <button aria-label="下一个" className="ml-[3px] h-0 w-0 border-y-4 border-l-4 border-y-transparent border-l-black" />
      </div>
    </div>
  );
}

function Terminal() {
  const heads = ["订单", "时间", "类型", "手数", "交易品种", "价格", "止损", "止盈", "时间", "价格", "库存费", "获利"];
  return (
    <section className="flex h-[180px] shrink-0 border-t border-[#a0a0a0] pt-[3px]">
      <div className="flex w-[15px] shrink-0 flex-col">
        <button aria-label="关闭终端" className="flex h-[12px] items-center justify-center">
          <svg viewBox="0 0 7 7" className="h-[7px] w-[7px]"><path d="M.5 .5l6 6M6.500 .5l-6 6" stroke="#000" strokeWidth="1.500" /></svg>
        </button>
        <div className="ml-px mt-[2px] flex-1 bg-[linear-gradient(180deg,#d8e4f1,#bccddf)]" />
      </div>
      <div className="min-w-0 flex-1 border-l border-t border-[#a0a0a0] bg-white pr-1">
        <table className="w-full table-fixed border-separate border-spacing-0">
          <colgroup>
            <col className="w-[168px]" />
            <col />
            <col className="w-[130px]" />
            <col className="w-[104px]" />
            <col className="w-[130px]" />
            <col className="w-[130px]" />
            <col className="w-[130px]" />
            <col className="w-[130px]" />
            <col className="w-[286px]" />
            <col className="w-[130px]" />
            <col className="w-[130px]" />
            <col className="w-[146px]" />
          </colgroup>
          <thead>
            <tr className="h-[25px]">
              {heads.map((h, i) => (
                <th key={i} className={i === 0 ? "border-b border-r border-b-[#c4c4c4] border-r-[#e0e0e0] p-0 pl-[6px] text-left font-normal leading-5" : "border-b border-r border-b-[#c4c4c4] border-r-[#e0e0e0] p-0 pr-1 text-right font-normal leading-5"}>
                  {h}
                  {i === 0 && <span className="ml-3 text-[9px] text-[#808080]">/</span>}
                </th>
              ))}
            </tr>
          </thead>
          <tbody>
            {orders.map((row, r) => (
              <tr key={row[0]} className={r % 2 ? "h-[21px] bg-[#eaeaea]" : "h-[21px] bg-white"}>
                {row.map((c, i) =>
                  i === 0 ? (
                    <td key={i} className="border-b border-r border-[#c4c4c4] p-0">
                      <span className="flex items-center gap-[5px] pl-[3px] leading-5">
                        <svg viewBox="0 0 14 16" className="h-4 w-[14px]">
                          <path d="M1.500 1.500h7l3 3v10h-10z" fill="#fff" stroke="#666" />
                          <path d="M8 1.500v3.500h3.500" fill="none" stroke="#333" strokeWidth="1.500" />
                          <circle cx="10.500" cy="12" r="3.200" fill="#1c8fd6" stroke="#0b5c94" strokeWidth=".6" />
                        </svg>
                        {c}
                      </span>
                    </td>
                  ) : (
                    <td key={i} className="border-b border-r border-[#c4c4c4] p-0 pr-[2px] text-right leading-5">{c}</td>
                  )
                )}
              </tr>
            ))}
          </tbody>
          <tfoot>
            <tr className="h-[21px] bg-[#c8c8c8] font-bold">
              <td colSpan={11} className="p-0">
                <span className="flex items-center gap-2 pl-[6px] leading-5">
                  <svg viewBox="0 0 8 8" className="h-2 w-2"><circle cx="4" cy="4" r="3" fill="#d8d8d8" stroke="#777" /><path d="M2.500 5.500l3-3" stroke="#777" /></svg>
                  <span>盈/亏: 25.73</span>
                  <span>信用额: 0.00</span>
                  <span>存款: 0.00</span>
                  <span>取款: 0.00</span>
                </span>
              </td>
              <td className="p-0 pr-1 text-right leading-5">25.73</td>
            </tr>
          </tfoot>
        </table>
      </div>
    </section>
  );
}

function Chevron({ up, color }: { up?: boolean; color: string }) {
  return (
    <svg viewBox="0 0 10 8" className="h-[8px] w-[10px]">
      <path d={up ? "M1.500 6L5 2.500L8.500 6" : "M1.500 2L5 5.500L8.500 2"} fill="none" stroke={color} strokeWidth="2" />
    </svg>
  );
}

function AlertDialog() {
  return (
    <div role="dialog" aria-label="警报" className="absolute left-[208px] top-[29px] flex w-[375px] flex-col border border-[#8c8c8c] bg-[#f0f0f0] pb-[9px] shadow-[2px_4px_12px_rgba(0,0,0,0.4)]">
      <div className="flex h-[30px] items-center bg-white pl-2">
        <Bell className="h-4 w-[15px]" />
        <span className="ml-[5px] flex-1 text-[#8c8c8c]">警报</span>
        <button aria-label="帮助" className="w-[45px] text-center text-[#808080]">?</button>
        <button aria-label="关闭警报" className="flex w-[46px] justify-center">
          <svg viewBox="0 0 10 10" className="h-[11px] w-[11px]"><path d="M0 0l10 10M10 0L0 10" stroke="#808080" /></svg>
        </button>
      </div>
      <div className="flex h-[85px] pl-[12px] pt-[11px]">
        <Bell className="h-[40px] w-[40px]" />
        <p className="ml-[17px] mt-1 flex-1 text-[11px] leading-4">GBPAUD - 15 - 成功做空</p>
        <div className="mr-[9px] mt-[5px] flex h-[61px] w-[17px] flex-col items-center justify-between border-l border-white py-1">
          <Chevron up color="#b8b8b8" />
          <Chevron color="#b8b8b8" />
        </div>
      </div>
      <div className="mx-[7px] flex h-[94px] border border-[#7a8090] bg-[#f0f0f0] p-px text-[11px]">
        <div className="flex-1 overflow-hidden">
          <table className="w-full table-fixed border-separate border-spacing-0">
            <colgroup>
              <col className="w-[83px]" />
              <col />
            </colgroup>
            <tbody>
              {alerts.map(([time, text], i) => (
                <tr key={time} className={i % 2 ? "h-[20px] bg-white" : "h-[20px] bg-[#e9e9e9]"}>
                  <td className="border-b border-r border-[#c4c4c4] p-0">
                    <span className="flex items-center gap-[5px] pl-1 leading-[19px]"><Bell className="h-[14px] w-[13px]" />{time}</span>
                  </td>
                  <td className="border-b border-[#c4c4c4] p-0 pl-1 leading-[19px]">{text}</td>
                </tr>
              ))}
            </tbody>
          </table>
        </div>
        <div className="flex w-[17px] flex-col items-center py-1">
          <Chevron up color="#505050" />
          <div className="mb-auto mt-[5px] h-[22px] w-[15px] bg-[#cdcdcd]" />
          <Chevron color="#505050" />
        </div>
      </div>
      <button className="mt-[9px] h-[21px] w-[73px] self-center border border-[#adadad] bg-[#e1e1e1] text-[11px] leading-[18px]">OK</button>
    </div>
  );
}

function SideMeter() {
  return (
    <svg viewBox="0 0 10 88" className="absolute right-[1px] top-[545px] h-[88px] w-[10px]">
      <path d="M9 1H4q-3 0-3 4v30" fill="none" stroke="#8a8a8a" strokeWidth="1.500" />
      <path d="M2 28h8v58H2z" fill="#2c333e" stroke="#4a5260" />
      <rect x="1" y="37" width="7" height="23" rx="2" fill="#3fd06c" stroke="#bdbdbd" strokeWidth=".6" />
      <path d="M5.500 66v18" stroke="#3fa7e0" strokeDasharray="1 1.500" />
    </svg>
  );
}

function Watermark() {
  return (
    <div className="pointer-events-none absolute bottom-[36px] right-[22px] flex items-center gap-[10px] text-white">
      <svg viewBox="0 0 36 40" className="h-10 w-9">
        <path d="M8 1h16c6 0 10 4 10 10v12c0 7-5 12-13 14l-4 3 1-5H8c-4 0-6-2-6-6V8c0-4 2-7 6-7z" fill="#fff" />
        <path d="M31 6c2 2 3 4 3 8v9c0 7-4 11-11 13-3 1-5 2-6 4l1-6" fill="none" stroke="#000" strokeWidth="2" />
        <path d="M24 8c-6-2-10 1-10 7v9c0 3-1 5-3 6M7 20h13" fill="none" stroke="#000" strokeWidth="3" />
        <circle cx="24" cy="20" r="2" fill="#000" />
      </svg>
      <span className="text-[34px] font-light leading-10 opacity-90 [text-shadow:1px_1px_1px_#222,-1px_-1px_1px_#ccc]">@稳赢老唐</span>
    </div>
  );
}

export default function App() {
  return (
    <div className="relative flex h-screen min-w-0 flex-col overflow-hidden bg-[#f0f0f0] font-['Noto_Sans','Noto_Sans_CJK_SC',sans-serif] text-[12px] leading-4 text-black">
      <TitleBar />
      <MenuBar />
      <div className="border-t border-[#a0a0a0]">
        <div className="border-t border-white">
          <Toolbar />
          <div className="h-px bg-[#696969]" />
        </div>
      </div>
      <div className="flex min-h-0 flex-1">
        <MarketWatch />
        <main className="flex min-w-0 flex-1 flex-col border-l-2 border-[#808080] pr-[2px]">
          <div className="min-h-0 flex-1">
            <PriceChart />
          </div>
          <ChartTabs />
        </main>
      </div>
      <Terminal />
      <AlertDialog />
      <SideMeter />
      <Watermark />
    </div>
  );
}
